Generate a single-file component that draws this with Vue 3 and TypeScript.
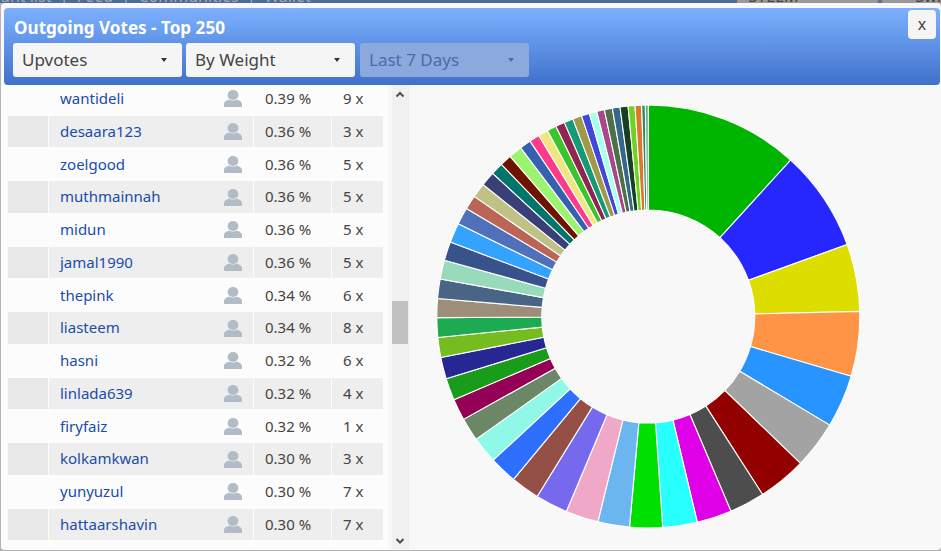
<script setup lang="ts">
interface Row { name: string; pct: string; n: string }
const rows: Row[] = [
  { name: 'wantideli', pct: '0.39 %', n: '9 x' },
  { name: 'desaara123', pct: '0.36 %', n: '3 x' },
  { name: 'zoelgood', pct: '0.36 %', n: '5 x' },
  { name: 'muthmainnah', pct: '0.36 %', n: '5 x' },
  { name: 'midun', pct: '0.36 %', n: '5 x' },
  { name: 'jamal1990', pct: '0.36 %', n: '5 x' },
  { name: 'thepink', pct: '0.34 %', n: '6 x' },
  { name: 'liasteem', pct: '0.34 %', n: '8 x' },
  { name: 'hasni', pct: '0.32 %', n: '6 x' },
  { name: 'linlada639', pct: '0.32 %', n: '4 x' },
  { name: 'firyfaiz', pct: '0.32 %', n: '1 x' },
  { name: 'kolkamkwan', pct: '0.30 %', n: '3 x' },
  { name: 'yunyuzul', pct: '0.30 %', n: '7 x' },
  { name: 'hattaarshavin', pct: '0.30 %', n: '7 x' },
  { name: '', pct: '', n: '' },
]
const stops: [number, string][] = [
  [42.3, '#00b500'], [70.1, '#2626ff'], [88.6, '#dddd00'], [106.4, '#ff9447'], [120.9, '#2894ff'],
  [134, '#a3a3a3'], [147.3, '#930000'], [157, '#4d4d4d'], [166.6, '#e000e8'], [176.1, '#28ffff'],
  [185.1, '#00e000'], [193.8, '#6cb6f0'], [202.8, '#f0a8c8'], [211.7, '#7769ee'], [219.6, '#944f47'],
  [227.2, '#2d6fff'], [234.5, '#8ff8e6'], [240.9, '#6b8766'], [246.8, '#930056'], [252.9, '#189c1a'],
  [258.8, '#272793'], [264.3, '#74bc20'], [269.7, '#1cab50'], [274.9, '#9c8e78'], [280.2, '#4a6485'],
  [285.4, '#9adabc'], [290.6, '#38528c'], [296, '#33a3ff'], [300.7, '#5070bb'], [304.6, '#bb6556'],
  [308.6, '#c0c285'], [312.6, '#3b3f77'], [316, '#00756b'], [319.2, '#6e1300'], [322.9, '#9bf36f'],
  [326, '#3860b0'], [328.8, '#ff3a8a'], [331.5, '#f0e680'], [334.1, '#3bc42c'], [336.6, '#90254f'],
  [339.1, '#159a75'], [341.6, '#a09a48'], [343.8, '#4048dc'], [345.9, '#aaffe8'], [348, '#a8478a'],
  [350.2, '#4c7048'], [352.3, '#34688a'], [354.5, '#16401f'], [356.4, '#6dd420'], [358.2, '#e0762c'],
  [359.2, '#2a8a6a'], [360, '#60b080'],
]
const CX = 648.3, CY = 316.5, R = 211.5, r = 106.5
function pt(rad: number, deg: number): string {
  const a = (deg * Math.PI) / 180
  return `${(CX + rad * Math.sin(a)).toFixed(2)} ${(CY - rad * Math.cos(a)).toFixed(2)}`
}
const slices = stops.map(([end, color], i) => {
  const start = i === 0 ? 0 : stops[i - 1][0]
  const large = end - start > 180 ? 1 : 0
  return {
    color,
    d: `M${pt(R, start)} A${R} ${R} 0 ${large} 1 ${pt(R, end)} L${pt(r, end)} A${r} ${r} 0 ${large} 0 ${pt(r, start)} Z`,
  }
})
</script>

<template>
  <div class="page">
    <div class="backdrop">
      <div class="nav"><span class="nav-text">unt list &nbsp;|&nbsp; Feed &nbsp;|&nbsp; Communities &nbsp;|&nbsp; Wallet</span></div>
      <div class="price"><span class="nav-text">STEEM</span></div>
      <div class="sep"></div>
      <div class="swi"><span class="nav-text">Swi</span></div>
    </div>
    <div class="modal">
      <header class="head">
        <div class="title">Outgoing Votes - Top 250</div>
        <div class="selects">
          <div class="sel"><span>Upvotes</span><i class="caret"></i></div>
          <div class="sel"><span>By Weight</span><i class="caret"></i></div>
          <div class="sel disabled"><span>Last 7 Days</span><i class="caret"></i></div>
        </div>
        <button class="close">x</button>
      </header>
      <div class="body">
        <div class="list">
          <div class="rows">
            <div v-for="(row, i) in rows" :key="i" class="row" :class="{ even: i % 2 === 1 }">
              <div class="cell first"></div>
              <div class="cell user">
                <a class="name">{{ row.name }}</a>
                <svg class="avatar" viewBox="0 0 18 17" width="18" height="17">
                  <ellipse cx="9" cy="5" rx="5.4" ry="5" fill="#b1bcc6" />
                  <path d="M0 17V14C0 11.6 2.6 10.4 5.4 9.4C7 10.8 11 10.8 12.6 9.4C15.4 10.4 18 11.6 18 14V17Z" fill="#b1bcc6" />
                </svg>
              </div>
              <div class="cell">{{ row.pct }}</div>
              <div class="cell">{{ row.n }}</div>
            </div>
          </div>
        </div>
        <div class="scrollbar">
          <svg class="arrow" viewBox="0 0 16 16" width="16" height="16"><path d="M4.5 11.5L8 8L11.5 11.5" fill="none" stroke="#505050" stroke-width="2" /></svg>
          <div class="track"><div class="thumb"></div></div>
          <svg class="arrow" viewBox="0 0 16 16" width="16" height="16"><path d="M4.5 6L8 9.5L11.5 6" fill="none" stroke="#505050" stroke-width="2" /></svg>
        </div>
        <div class="chart">
          <svg viewBox="408 85 533 464" width="533" height="464">
            <path v-for="(s, i) in slices" :key="i" :d="s.d" :fill="s.color" stroke="#ffffff" stroke-width="1.1" stroke-linejoin="round" />
          </svg>
        </div>
      </div>
    </div>
  </div>
</template>

<style>
html, body { margin: 0; background: #b4b4b4; overflow: hidden; }
</style>

<style scoped>
.page {
  width: 941px;
  height: 551px;
  overflow: hidden;
  display: flex;
  flex-direction: column;
  font-family: "Noto Sans", "Open Sans", sans-serif;
}
.backdrop {
  height: 3px;
  flex: none;
  display: flex;
  overflow: hidden;
  color: #a3a9b5;
  font-size: 16px;
  line-height: 14px;
}
.nav-text { display: block; margin-top: -11px; white-space: nowrap; }
.nav { width: 737px; background: #4f6a96; }
.price { width: 141px; background: #999; color: #444; padding-left: 12px; box-sizing: border-box; }
.sep { width: 4px; background: #5a7298; }
.swi { flex: 1; background: #999; color: #444; padding-left: 34px; }
.modal {
  width: 940px;
  height: 547px;
  margin-left: 1px;
  flex: none;
  background: #f8f8f8;
  border-radius: 4px;
  display: flex;
  flex-direction: column;
  padding: 5px 0 1px;
  box-sizing: border-box;
  overflow: hidden;
}
.head {
  position: relative;
  z-index: 1;
  height: 77px;
  flex: none;
  margin: 0 1px 0 3px;
  border-radius: 4px;
  background: linear-gradient(#7db1ff, #3e71ca);
  box-sizing: border-box;
  padding: 8px 9px 0;
}
.title {
  color: #fff;
  font-size: 17.1px;
  font-weight: 700;
  line-height: 24px;
  padding-left: 1px;
}
.selects { display: flex; gap: 4px; margin-top: 3px; }
.sel {
  width: 169px;
  height: 34px;
  flex: none;
  box-sizing: border-box;
  background: #f5f5f5;
  border-radius: 3px;
  color: #444;
  font-size: 17px;
  line-height: 34px;
  padding: 0 15px 0 9px;
  display: flex;
  justify-content: space-between;
  align-items: center;
}
.sel.disabled { background: #8ba9dc; color: #4c6ba8; margin-left: 1px; }
.caret {
  width: 0;
  height: 0;
  border-left: 3px solid transparent;
  border-right: 3px solid transparent;
  border-top: 4px solid #333;
}
.disabled .caret { border-top-color: #4c6ba8; }
.close {
  position: absolute;
  top: 2px;
  right: 4px;
  width: 28px;
  height: 29px;
  padding: 0 0 2px;
  border: 0;
  border-radius: 4px;
  background: #f5f5f5;
  color: #444;
  font-family: inherit;
  font-size: 16px;
  line-height: 26px;
}
.body { flex: 1; min-height: 0; display: flex; }
.list {
  width: 387px;
  flex: none;
  overflow: hidden;
  background: #fdfdfd;
  padding-left: 7px;
  box-sizing: border-box;
}
.rows { display: flex; flex-direction: column; gap: 2px; margin-top: -2px; }
.row {
  display: grid;
  grid-template-columns: 40px 204px 77px 51px;
  gap: 1px;
  height: 30.77px;
  flex: none;
  width: 375px;
  font-size: 15px;
  color: #444;
  line-height: 31.5px;
}
.cell { background: #fcfcfc; padding-left: 11px; box-sizing: border-box; white-space: nowrap; }
.even .cell { background: #eeeeee; }
.even .cell.first { background: #e8e8e8; }
.user { display: flex; justify-content: space-between; align-items: center; padding-right: 11px; }
.name { color: #1a4caa; }
.avatar { display: block; }
.scrollbar {
  width: 16px;
  flex: none;
  margin-left: 4px;
  background: #f1f1f1;
  display: flex;
  flex-direction: column;
}
.arrow { display: block; flex: none; }
.track { flex: 1; padding-top: 200px; box-sizing: border-box; }
.thumb { height: 43px; background: #c1c1c1; }
.chart { flex: 1; min-width: 0; border-left: 1px solid #f0f0f0; margin-right: -1px; }
.chart svg { display: block; margin-left: -1px; }
</style>
